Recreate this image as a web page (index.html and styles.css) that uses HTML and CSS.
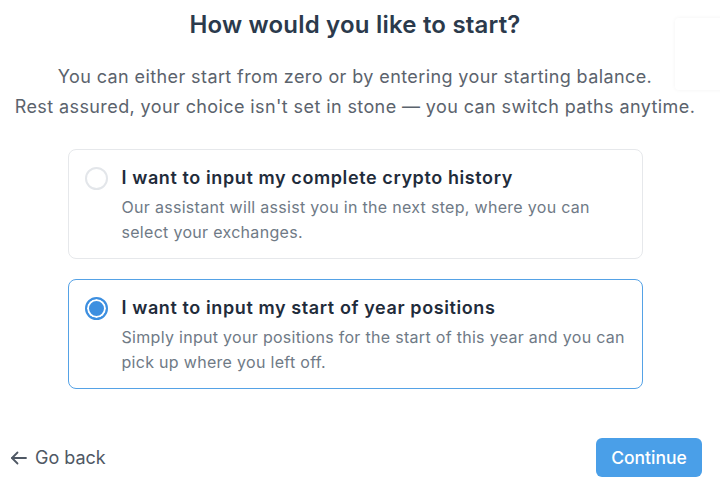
FILE: index.html
```html
<!DOCTYPE html>
<html lang="en">
<head>
    <meta charset="UTF-8">
    <meta name="viewport" content="width=device-width, initial-scale=1.0">
    <link rel="stylesheet" href="styles.css">
    <title>How would you like to start?</title>
</head>
<body>
    <div class="corner-card"></div>
    <div class="page">
        <h1 class="title">How would you like to start?</h1>
        <p class="lead">You can either start from zero or by entering your starting balance.<br>Rest assured, your choice isn't set in stone — you can switch paths anytime.</p>

        <div class="options">
            <label class="option">
                <span class="radio"></span>
                <span class="option-text">
                    <span class="option-title">I want to input my complete crypto history</span>
                    <span class="option-desc">Our assistant will assist you in the next step, where you can select your exchanges.</span>
                </span>
            </label>
            <label class="option selected">
                <span class="radio"></span>
                <span class="option-text">
                    <span class="option-title">I want to input my start of year positions</span>
                    <span class="option-desc">Simply input your positions for the start of this year and you can pick up where you left off.</span>
                </span>
            </label>
        </div>
    </div>

    <div class="footer">
        <a class="back" href="#">
            <svg width="18" height="18" viewBox="0 0 18 18" fill="none" stroke="currentColor" stroke-width="1.8" stroke-linecap="round" stroke-linejoin="round">
                <line x1="2" y1="9" x2="16" y2="9"/>
                <polyline points="7.5,3.5 2,9 7.5,14.5"/>
            </svg>
            Go back
        </a>
        <button class="continue" type="button">Continue</button>
    </div>
</body>
</html>
```

FILE: styles.css
```css
body {
    margin: 0;
    background: #fff;
    font-family: Inter, "Noto Sans", sans-serif;
    width: 720px;
    height: 490px;
    overflow: hidden;
    position: relative;
}

/* faint panel peeking in at the top right */
.corner-card {
    position: absolute;
    top: 18px;
    left: 675px;
    width: 60px;
    height: 72px;
    border-radius: 4px;
    box-shadow: 0 0 4px rgba(0, 0, 0, 0.05);
}

.page {
    width: 710px;
    padding-top: 10px;
}

.title {
    margin: 0;
    text-align: center;
    font-size: 24px;
    line-height: 30px;
    font-weight: 600;
    letter-spacing: 0.2px;
    color: #2b3a4c;
}

.lead {
    margin: 22px 0 0;
    text-align: center;
    font-size: 18px;
    line-height: 30px;
    letter-spacing: 0.4px;
    color: #5b636d;
}

.options {
    width: 575px;
    margin: 27px auto 0;
    display: flex;
    flex-direction: column;
    gap: 20px;
}

.option {
    display: flex;
    gap: 14px;
    padding: 16px 16px 13px;
    border: 1px solid #e6e8eb;
    border-radius: 8px;
    cursor: pointer;
}

.option.selected {
    border-color: #55a2e6;
}

.radio {
    flex: none;
    box-sizing: border-box;
    width: 23px;
    height: 23px;
    margin-top: 1px;
    border: 2px solid #e3e6ea;
    border-radius: 50%;
}

.selected .radio {
    border: 2.5px solid #3d8fe0;
    background: #3d8fe0;
    box-shadow: inset 0 0 0 2px #fff;
}

.option-text {
    display: flex;
    flex-direction: column;
}

.option-title {
    font-size: 18px;
    line-height: 24px;
    font-weight: 600;
    letter-spacing: 0.6px;
    color: #1f2c3b;
}

.option-desc {
    margin-top: 5px;
    font-size: 16px;
    line-height: 25px;
    letter-spacing: 0.3px;
    color: #6f7a86;
}

.footer {
    display: flex;
    justify-content: space-between;
    align-items: center;
    margin-top: 49px;
    padding: 0 18px 0 10px;
}

.back {
    display: flex;
    align-items: center;
    gap: 7px;
    font-size: 18px;
    color: #4f5864;
    text-decoration: none;
}

.continue {
    width: 106px;
    height: 39px;
    border: none;
    border-radius: 6px;
    background: #4a9fe8;
    color: #fff;
    font-family: inherit;
    font-size: 17.5px;
    font-weight: 500;
}
```
